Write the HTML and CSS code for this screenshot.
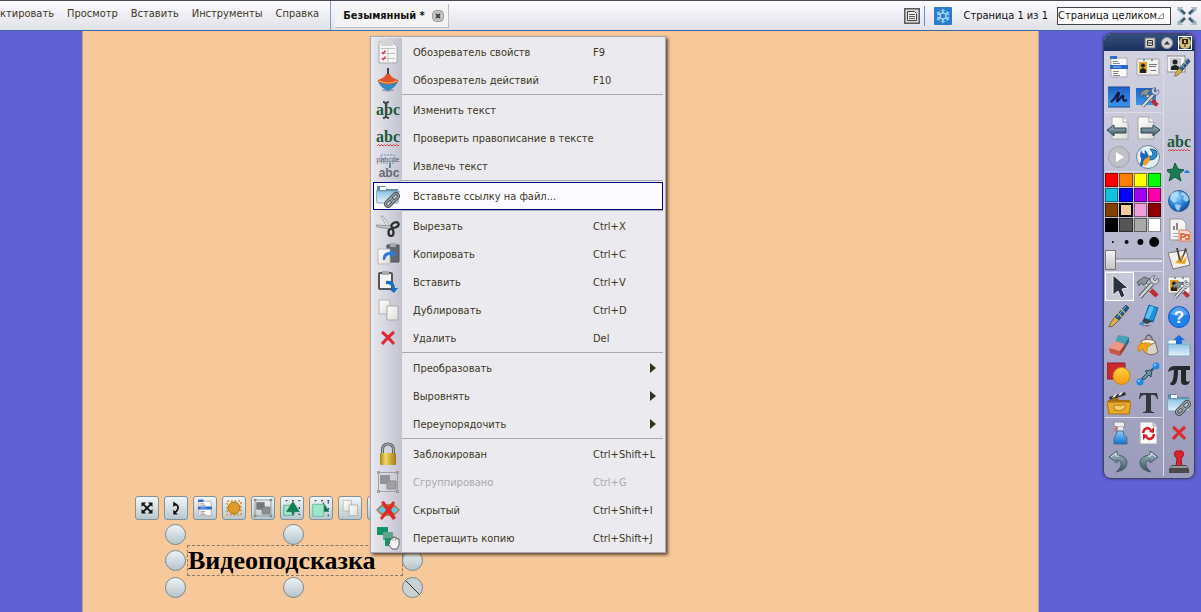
FILE: index.html
```html
<!DOCTYPE html>
<html lang="ru">
<head>
<meta charset="utf-8">
<title>Безымянный</title>
<link rel="stylesheet" href="styles.css">
</head>
<body>
<svg class="defs" aria-hidden="true">
  <defs>
    <linearGradient id="gBlue" x1="0" y1="0" x2="0" y2="1"><stop offset="0" stop-color="#8fd0f8"/><stop offset="1" stop-color="#0b6fd0"/></linearGradient>
    <linearGradient id="gDeep" x1="0" y1="0" x2="0" y2="1"><stop offset="0" stop-color="#1f62c4"/><stop offset="1" stop-color="#3b96ea"/></linearGradient>
    <linearGradient id="gFolder" x1="0" y1="0" x2="0" y2="1"><stop offset="0" stop-color="#8cc4e6"/><stop offset="1" stop-color="#e4f2fa"/></linearGradient>
    <linearGradient id="gGold" x1="0" y1="0" x2="1" y2="0"><stop offset="0" stop-color="#a8841c"/><stop offset=".35" stop-color="#f0d868"/><stop offset="1" stop-color="#a07c14"/></linearGradient>
    <linearGradient id="gPaper" x1="0" y1="0" x2="1" y2="1"><stop offset="0" stop-color="#fff"/><stop offset="1" stop-color="#dcdcd8"/></linearGradient>
    <linearGradient id="gOrange" x1="0" y1="0" x2="0" y2="1"><stop offset="0" stop-color="#ffd23c"/><stop offset="1" stop-color="#f59a10"/></linearGradient>
    <linearGradient id="gSteel" x1="0" y1="0" x2="0" y2="1"><stop offset="0" stop-color="#a4bcc4"/><stop offset="1" stop-color="#38525e"/></linearGradient>
    <radialGradient id="gGlobe" cx=".4" cy=".3" r=".8"><stop offset="0" stop-color="#9cdcff"/><stop offset=".5" stop-color="#2a86dc"/><stop offset="1" stop-color="#0b3c8c"/></radialGradient>
  </defs>
  <symbol id="i-folderlink" viewBox="0 0 24 24">
    <path d="M1 2h8l2 3h11v12H1z" fill="#5a8aa4"/><path d="M4 3h6v3H4z" fill="#fff"/>
    <path d="M0 7h23l-1 12H1z" fill="url(#gFolder)" stroke="#7ba6be"/>
    <g fill="none" stroke="#4c5458" stroke-width="3"><rect x="-4.500" y="-2.500" width="9" height="5" rx="2.500" transform="translate(18.500 13.500) rotate(-45)"/><rect x="-4.500" y="-2.500" width="9" height="5" rx="2.500" transform="translate(13.500 18.500) rotate(-45)"/></g>
    <g fill="none" stroke="#aab2b6" stroke-width="1"><rect x="-4.500" y="-2.500" width="9" height="5" rx="2.500" transform="translate(18.500 13.500) rotate(-45)"/><rect x="-4.500" y="-2.500" width="9" height="5" rx="2.500" transform="translate(13.500 18.500) rotate(-45)"/></g>
  </symbol>
  <symbol id="i-wave" viewBox="0 0 24 24">
    <path d="M1 20l1.500-1.500L4 20l1.500-1.500L7 20l1.500-1.500L10 20l1.500-1.500L13 20l1.500-1.500L16 20l1.500-1.500L19 20l1.500-1.500L22 20l1-1" fill="none" stroke="#e83a3a"/>
  </symbol>
  <symbol id="i-cross" viewBox="0 0 24 24"><path d="M6 6Q11 10 18 18M18 6Q12 11 6 18" fill="none" stroke="#dc2a34" stroke-width="3"/></symbol>
  <symbol id="i-list" viewBox="0 0 24 24">
    <path d="M4 3h16v19H4z" fill="#fafafa" stroke="#a8a8b0"/><path d="M3 1h7v3H3z" fill="#2c6ccc"/><path d="M3 10h18v4H3z" fill="#2a66c8"/>
    <path d="M6 6.500h5M6 8.500h7M6 16.500h6M6 18.500h5M6 20.500h7" stroke="#888"/><path d="M6 12h8" stroke="#9cc4ff"/>
  </symbol>
  <symbol id="i-copies" viewBox="0 0 24 24"><path d="M3 2h11v14H3z" fill="url(#gPaper)" stroke="#b4b4b0"/><path d="M11 8h11v14H11z" fill="url(#gPaper)" stroke="#a8a8a4"/></symbol>
  <symbol id="i-group" viewBox="0 0 24 24"><rect x="2.500" y="2.500" width="19" height="19" fill="none" stroke="#8a8a8a"/><path d="M4 5h10v9H4z" fill="#777"/><path d="M11 11h9v8h-9z" fill="#8e8e8e" stroke="#6e6e6e"/><path d="M1 1h3v3H1zM20 1h3v3h-3zM1 20h3v3H1zM20 20h3v3h-3z" fill="#8a8a8a"/></symbol>
  <symbol id="i-tools" viewBox="0 0 24 24">
    <path d="M7 7L19 20" stroke="#6c7478" stroke-width="4"/><path d="M7 7L19 20" stroke="#d8dee0" stroke-width="2.500"/><path d="M15 15l6 6" stroke="#c02a34" stroke-width="4.500"/>
    <path d="M1 7l7-5 6 2-3 2-1 3-3 1-2-2-2 3z" fill="#889498" stroke="#3c4448" stroke-width=".7"/>
    <path d="M4 22L16 9" stroke="#545c60" stroke-width="4.500"/><path d="M4 22L16 9" stroke="#d4dadc" stroke-width="2.500"/>
    <path d="M22 3l-3 3-2-2 2-3c-4-1-6 3-4 6l3 2c3 1 6-2 4-6z" fill="#ccd2d6" stroke="#596064" stroke-width=".8"/>
  </symbol>
  <symbol id="i-card" viewBox="0 0 24 24"><rect x="1" y="4" width="22" height="16" rx="1" fill="#f2f2f2" stroke="#a4a4a4"/><path d="M3 7h8v11H3z" fill="#e0a020"/><circle cx="7" cy="10.500" r="2" fill="#222"/><path d="M4 18v-3q3-4 6 0v3z" fill="#222"/><path d="M13 9.500h8M13 11.500h7M15 15.500h5" stroke="#777"/><path d="M7 5h2M15 5h2" stroke="#444"/></symbol>
  <symbol id="i-page" viewBox="0 0 24 24"><path d="M5 1h11l5 5v17H5z" fill="url(#gPaper)" stroke="#a8a8a8"/><path d="M16 1v5h5" fill="#fff" stroke="#a0a0a0"/></symbol>
  <symbol id="i-pen" viewBox="0 0 24 24"><path d="M20 1l3 3-10 12-4-3z" fill="#1e5888" stroke="#15304c" stroke-width=".7"/><path d="M15 5l4 4M12 9l4 4" stroke="#e4b848" stroke-width="1.200"/><path d="M9 13l4 3-6 6-4 1 2-5z" fill="#d8b048" stroke="#5a471c" stroke-width=".7"/><path d="M20 2l-9 11" stroke="#7cb8dc"/></symbol>
  <symbol id="i-note" viewBox="0 0 16 16"><rect x=".75" y=".75" width="14.500" height="14.500" fill="#d8d8d8" stroke="#5a5a5a" stroke-width="1.500"/><path d="M3.500 3.500h7l2 2v7h-9z" fill="#f4f4f4" stroke="#444"/><path d="M5 6.500h6M5 8.500h6M5 10.500h6" stroke="#555"/></symbol>
</svg>

<header class="topbar">
  <nav class="menubar">
    <button>ктировать</button>
    <button>Просмотр</button>
    <button>Вставить</button>
    <button>Инструменты</button>
    <button>Справка</button>
  </nav>
  <div class="tab">
    <span>Безымянный *</span>
    <button class="tab-close" aria-label="Закрыть"><svg viewBox="0 0 12 12"><rect x=".5" y=".5" width="11" height="11" rx="4" fill="#c4c4c4" stroke="#999"/><path d="M4 4l4 4M8 4l-4 4" stroke="#444" stroke-width="1.800"/></svg></button>
  </div>
  <div class="status">
    <button class="icon16" aria-label="Заметки"><svg viewBox="0 0 16 16"><use href="#i-note"/></svg></button>
    <span class="rule"></span>
    <button class="icon18" aria-label="Настройки"><svg viewBox="0 0 18 18"><rect width="18" height="18" rx="1" fill="#2c7ccc"/><g stroke="#9cd2f8" stroke-width="1.500" fill="none"><circle cx="9" cy="9" r="3"/><path d="M9 6V2M9 12v4M6.500 7.500L3 5.500M11.500 7.500L15 5.500M6.500 10.500L3 12.500M11.500 10.500L15 12.500"/><path d="M7 3l2 2 2-2M7 15l2-2 2 2M3 8l2-1V4M15 8l-2-1V4M3 10l2 1v3M15 10l-2 1v3" stroke-width="1"/></g></svg></button>
    <label for="zoom" class="pageno">Страница 1 из 1</label>
    <span class="zoom">
      <select id="zoom"><option>Страница целиком</option></select>
      <svg viewBox="0 0 8 8" aria-hidden="true"><path d="M1 6.500h5.500V1z" fill="#fff" stroke="#888"/></svg>
    </span>
    <button class="icon20" aria-label="Во весь экран"><svg viewBox="0 0 20 18"><path d="M1 1l7 6M19 1l-7 6M1 17l7-6M19 17l-7-6" stroke="#9ab4c4" stroke-width="4"/><path d="M4 3l4 4M16 3l-4 4M4 15l4-4M16 15l-4-4" stroke="#3c5668" stroke-width="2"/><path d="M0 .5h6M14 .5h6M0 17.500h6M14 17.500h6" stroke="#a8c0cc"/></svg></button>
  </div>
</header>

<main class="desk">
  <section class="sheet"></section>

  <div class="selection">
    <div class="handlebar">
      <button aria-label="Переместить"><svg viewBox="0 0 24 24"><path d="M8 8l8 8M16 8l-8 8" stroke="#111" stroke-width="2"/><path d="M6 6h5l-5 5zM18 6h-5l5 5zM6 18h5l-5-5zM18 18h-5l5-5z" fill="#111"/></svg></button>
      <button aria-label="Повернуть"><svg viewBox="0 0 24 24"><path d="M10 8q5 0 4 5-1 3-4 4" fill="none" stroke="#111" stroke-width="2"/><path d="M9 5v6l4-3zM9 14v5h5z" fill="#111"/></svg></button>
      <button aria-label="Меню"><svg viewBox="0 0 24 24"><use href="#i-list" x="2" y="2" width="20" height="20"/></svg></button>
      <button aria-label="Прозрачность"><svg viewBox="0 0 24 24"><rect x="4.500" y="4.500" width="15" height="15" fill="none" stroke="#d89a3c" stroke-width="2" stroke-dasharray="2 2"/><circle cx="12" cy="12" r="6.500" fill="#e09a28" stroke="#a86c10"/></svg></button>
      <button aria-label="Группировать"><svg viewBox="0 0 24 24"><use href="#i-group" x="1" y="1" width="22" height="22"/></svg></button>
      <button aria-label="На передний план"><svg viewBox="0 0 24 24"><path d="M3 9h11v11H3z" fill="#a4e4c8" stroke="#58ac88"/><path d="M13 5l7 11h-6v3h-2v-3H6z" fill="#128454" stroke="#086038" stroke-width=".5"/><path d="M5 4h16M19 19h2M20 11v2" stroke="#446" stroke-width="1.500" stroke-dasharray="2 5"/></svg></button>
      <button aria-label="Вперёд"><svg viewBox="0 0 24 24"><path d="M14 5l7 11h-7z" fill="#087050"/><path d="M3 8h12v13H3z" fill="#a0e4cc" stroke="#68bc9c"/><path d="M5 4h16M20 5v16" stroke="#446" stroke-width="1.500" stroke-dasharray="2 5"/></svg></button>
      <button aria-label="Дублировать"><svg viewBox="0 0 24 24"><use href="#i-copies" x="2" y="2" width="20" height="20"/></svg></button>
      <button aria-label="Перетащить копию"><svg viewBox="0 0 24 24"><path d="M3 8h8v8H3z" fill="#128454"/></svg></button>
    </div>
    <p class="object">Видеоподсказка</p>
    <i class="knob west north"></i><i class="knob mid north"></i>
    <i class="knob west center"></i><i class="knob east center"></i>
    <i class="knob west south"></i><i class="knob mid south"></i><i class="knob east south slash"></i>
  </div>

  <div class="context" role="menu">
    <button role="menuitem"><svg viewBox="0 0 24 24"><path d="M3 2h13l5 4v17H3z" fill="#f6f6f6" stroke="#aaa"/><path d="M5 1h12v5H5z" fill="#d4d4d0"/><path d="M5 8.500h14M5 13.500h14M5 18.500h14M12 8v14" stroke="#c0c0c0"/><path d="M6 12l1.500 1.500 2-3M6 18l1.500 1.500 2-3" stroke="#d84848" fill="none" stroke-width="1.500"/></svg><span>Обозреватель свойств</span><kbd>F9</kbd></button>
    <button role="menuitem"><svg viewBox="0 0 24 24"><path d="M12 0v7" stroke="#444" stroke-width="2"/><ellipse cx="12" cy="22" rx="6" ry="1.500" fill="#9a9aa8"/><path d="M2 13q10 6 20 0-2 6-7 8l-3 2-3-2q-5-2-7-8z" fill="#2c8cc8"/><path d="M10 6h4q0 3 8 6v2q-10 5-20 0v-2q8-3 8-6z" fill="#e05428"/><path d="M3 13q9 4 18 0" stroke="#f4c060" fill="none"/></svg><span>Обозреватель действий</span><kbd>F10</kbd></button>
    <hr>
    <button role="menuitem"><svg viewBox="0 0 24 24"><text x="12" y="17" text-anchor="middle" class="abc">abc</text><path d="M7 4q2 0 3 1.500Q11 4 13 4M10 5v14M7 20q2 0 3-1.500Q11 20 13 20" fill="none" stroke="#444" stroke-width="1.800"/></svg><span>Изменить текст</span></button>
    <button role="menuitem"><svg viewBox="0 0 24 24"><text x="12" y="16" text-anchor="middle" class="abc">abc</text><use href="#i-wave"/></svg><span>Проверить правописание в тексте</span></button>
    <button role="menuitem"><svg viewBox="0 0 24 24"><text x="12" y="8" text-anchor="middle" class="tiny">pabcde</text><path d="M5 1h13v8H5z" fill="none" stroke="#6a94b8" stroke-dasharray="2 1"/><path d="M14 9v5" stroke="#60889c" stroke-width="2"/><text x="13" y="23" text-anchor="middle" class="abc-sans">abc</text></svg><span>Извлечь текст</span></button>
    <hr>
    <button role="menuitem" class="current"><svg viewBox="0 0 24 24"><use href="#i-folderlink"/></svg><span>Вставьте ссылку на файл...</span></button>
    <hr>
    <button role="menuitem"><svg viewBox="0 0 24 24"><path d="M5 2l2 0 8 12-3 1z" fill="#e4e8ea" stroke="#8c9498" stroke-width=".7"/><path d="M0 11l1 2 13 2 2-3z" fill="#c0c6c8" stroke="#7c8488" stroke-width=".7"/><g fill="none" stroke="#2c2c2c" stroke-width="2.200"><ellipse cx="19" cy="11" rx="3.800" ry="2.500" transform="rotate(-25 19 11)"/><ellipse cx="15" cy="18.500" rx="2.500" ry="3.500"/></g></svg><span>Вырезать</span><kbd>Ctrl+X</kbd></button>
    <button role="menuitem"><svg viewBox="0 0 24 24"><path d="M11 3h12v17H11z" fill="#63676e" stroke="#4a4e54"/><path d="M14 1h6v4h-6z" fill="#a4a8ac"/><path d="M2 7h12v15H2z" fill="url(#gPaper)" stroke="#b8b8b8"/><path d="M7 18q-1-8 7-8V7l6 5-6 4v-3q-4 0-5 5z" fill="#2f7cd8"/></svg><span>Копировать</span><kbd>Ctrl+C</kbd></button>
    <button role="menuitem"><svg viewBox="0 0 24 24"><rect x="3" y="3" width="13" height="16" rx="1" fill="#f4f4f2" stroke="#555" stroke-width="2"/><path d="M6 1h7v4H6z" fill="#a8a8a8"/><path d="M10 11q8-2 9 7h3l-4 5-5-4h3q0-5-6-5z" fill="#1a6cc8"/></svg><span>Вставить</span><kbd>Ctrl+V</kbd></button>
    <button role="menuitem"><svg viewBox="0 0 24 24"><use href="#i-copies"/></svg><span>Дублировать</span><kbd>Ctrl+D</kbd></button>
    <button role="menuitem"><svg viewBox="0 0 24 24"><use href="#i-cross"/></svg><span>Удалить</span><kbd>Del</kbd></button>
    <hr>
    <button role="menuitem" class="more"><i></i><span>Преобразовать</span></button>
    <button role="menuitem" class="more"><i></i><span>Выровнять</span></button>
    <button role="menuitem" class="more"><i></i><span>Переупорядочить</span></button>
    <hr>
    <button role="menuitem"><svg viewBox="0 0 24 24"><path d="M6.500 12V8q0-6 5.500-6t5.500 6v4" fill="none" stroke="#5c6468" stroke-width="3"/><path d="M6.500 12V8q0-6 5.500-6t5.500 6v4" fill="none" stroke="#b4bcc0"/><rect x="4" y="11" width="16" height="12" rx="1" fill="url(#gGold)"/></svg><span>Заблокирован</span><kbd>Ctrl+Shift+L</kbd></button>
    <button role="menuitem" disabled><svg viewBox="0 0 24 24"><use href="#i-group"/></svg><span>Сгруппировано</span><kbd>Ctrl+G</kbd></button>
    <button role="menuitem"><svg viewBox="0 0 24 24"><path d="M0 12l6-6h12l6 6-6 6H6z" fill="#b47c48"/><path d="M2 12q5-6 8 0-3 6-8 0zM14 12q4-6 8 0-4 6-8 0z" fill="#60c8ec"/><path d="M5 4l3-1 4 6 5-6 2 2-4 7 5 8-3 2-5-7-6 7-2-2 6-8z" fill="#e02828"/></svg><span>Скрытый</span><kbd>Ctrl+Shift+I</kbd></button>
    <button role="menuitem"><svg viewBox="0 0 24 24"><path d="M1 1h11v8H1z" fill="#0e9468"/><path d="M7 6h10v8H7z" fill="#64a48c"/><path d="M9 12h11v8H9z" fill="#0e9468"/><path d="M14 17l-1-2 2-1v-2h2v-1h2v1h2v1h2v6l-2 4h-5l-4-5z" fill="#f4f4f4" stroke="#555" stroke-width=".9"/><path d="M17 12v3M19.500 12v3" stroke="#888" stroke-width=".7"/></svg><span>Перетащить копию</span><kbd>Ctrl+Shift+J</kbd></button>
  </div>

  <aside class="toolbox">
    <div class="toolbox-title">
      <button aria-label="Заметки"><svg viewBox="0 0 12 12"><rect x="1" y="1" width="10" height="10" fill="#d8d8d8" stroke="#777"/><path d="M3.500 3.500h5v5h-5zM4 6h4" fill="none" stroke="#333"/></svg></button>
      <button aria-label="Свернуть"><svg viewBox="0 0 12 12"><circle cx="6" cy="6" r="5.500" fill="#d4d4d8" stroke="#9a9a9a"/><path d="M3 7.500h6L6 4z" fill="#333"/></svg></button>
      <button class="pin" aria-label="Закрепить"><svg viewBox="0 0 12 12"><circle cx="6" cy="6" r="6" fill="#d4bc74"/><path d="M3 2h6v5H6.500v3h-1V7H3z" fill="#2c2818"/><path d="M5 3h2v3H5z" fill="#d4bc74"/></svg></button>
    </div>
    <div class="toolbox-body">
      <div class="tools-left">
        <div class="tiles tall">
          <button aria-label="Главное меню"><svg viewBox="0 0 24 24"><use href="#i-list"/></svg></button>
          <button aria-label="Профиль"><svg viewBox="0 0 24 24"><use href="#i-card"/></svg></button>
          <button aria-label="Аннотации"><svg viewBox="0 0 24 24"><path d="M1 2h22v20H1z" fill="url(#gDeep)"/><path d="M1 2h22M1 22h22" stroke="#184c94"/><path d="M4 17q4-3 7-9 2-1 0 4-2 5 0 4l4-5q2-1 1 2 0 4 4 2" fill="none" stroke="#0c1840" stroke-width="2"/></svg></button>
          <button aria-label="Инструменты рабочего стола"><svg viewBox="0 0 24 24"><path d="M0 3h20v17H0z" fill="url(#gDeep)"/><use href="#i-tools" x="3" y="2" width="21" height="21"/></svg></button>
        </div>
        <hr>
        <div class="tiles">
          <button aria-label="Предыдущая страница"><svg viewBox="0 0 24 24"><use href="#i-page"/><path d="M0 14l7-5v3h12v5H7v3z" fill="url(#gSteel)" stroke="#2c4450"/></svg></button>
          <button aria-label="Следующая страница"><svg viewBox="0 0 24 24"><use href="#i-page" x="-3"/><path d="M24 14l-7-5v3H5v5h12v3z" fill="url(#gSteel)" stroke="#2c4450"/></svg></button>
          <button aria-label="Воспроизвести"><svg viewBox="0 0 24 24"><circle cx="12" cy="12" r="10.500" fill="#c0c0c6" stroke="#a2a2ac"/><path d="M9 7l8 5-8 5z" fill="#fff"/></svg></button>
          <button aria-label="Запустить"><svg viewBox="0 0 24 24"><circle cx="12" cy="12" r="11.500" fill="#e2eef2" stroke="#6a8490"/><path d="M14 4q8 0 7 6-1 5-8 5 1-3-1-4 5 1 5-2 0-2-3-5z" fill="#2b8fd0" stroke="#105c9c"/><path d="M5 4q0 4 4 5-1-3 0-4 5 4 2 10-3 4-6 7-2-3 0-6 1-3-1-5z" fill="#1e66b0"/><path d="M7 19q0-5 4-6 2-1 2-3 2 5-1 8l-3 3z" fill="#f4a020"/></svg></button>
        </div>
        <hr>
        <div class="palette">
          <button class="c-red"></button><button class="c-orange"></button><button class="c-yellow"></button><button class="c-green"></button>
          <button class="c-cyan"></button><button class="c-blue"></button><button class="c-violet"></button><button class="c-magenta"></button>
          <button class="c-brown"></button><button class="c-peach"></button><button class="c-pink"></button><button class="c-maroon"></button>
          <button class="c-black"></button><button class="c-dark"></button><button class="c-gray"></button><button class="c-white"></button>
        </div>
        <svg class="dots" viewBox="0 0 58 16"><circle cx="8" cy="9" r="1" /><circle cx="22" cy="9" r="2"/><circle cx="36" cy="9" r="3"/><circle cx="50" cy="9" r="5"/></svg>
        <input class="width" type="range" min="0" max="100" value="0" aria-label="Толщина пера">
        <hr>
        <div class="tiles">
          <button class="active" aria-label="Выбрать"><svg viewBox="0 0 24 24"><path d="M6 0v20l5-4 3 7 4-2-3-7 6-1z" fill="#2c333c" stroke="#e6e6ee"/></svg></button>
          <button aria-label="Инструменты"><svg viewBox="0 0 24 24"><use href="#i-tools"/></svg></button>
          <button aria-label="Перо"><svg viewBox="0 0 24 24"><use href="#i-pen" x="-1"/></svg></button>
          <button aria-label="Маркер"><svg viewBox="0 0 24 24"><path d="M4 21h12l-5 2z" fill="#7c7c94"/><path d="M13 1l9 3-5 14-9-3z" fill="#1e90dc" stroke="#0a68b4"/><path d="M14 2l4 1-5 12-4-1z" fill="#60c0f4"/><path d="M8 14l9 3-6 3-5-2z" fill="#2c4858"/><path d="M5 18l4 2-6 1z" fill="#1c80cc"/></svg></button>
          <button aria-label="Ластик"><svg viewBox="0 0 24 24"><path d="M11 2l11 2-4 8-10-3z" fill="#4aa0b4"/><path d="M22 4v5l-5 8 1-6z" fill="#246c80"/><path d="M8 8l10 3-5 7-11-3z" fill="#f09484"/><path d="M2 15l11 3v5L3 20z" fill="#c4584c"/><path d="M13 18l5-7v5l-5 7z" fill="#a44038"/></svg></button>
          <button aria-label="Заливка"><svg viewBox="0 0 24 24"><path d="M9 8q1-6 4-6 3 1 4 7" fill="none" stroke="#686868" stroke-width="1.500"/><path d="M5 8l14 0 3 11q-6 5-12 1z" fill="#d8d4c4" stroke="#77705c"/><ellipse cx="12" cy="9" rx="7" ry="2.500" fill="#fcf4dc" stroke="#77705c"/><path d="M2 14q2-5 10-4 4 0 2 3-3-1-3 5-2 4-3 0-1-4-2-2-2 3-4 2z" fill="#f4a414" stroke="#b47410" stroke-width=".6"/></svg></button>
          <button aria-label="Фигура"><svg viewBox="0 0 24 24"><path d="M0 1h18v16H0z" fill="#cc2830" stroke="#941c20"/><circle cx="14.500" cy="14" r="8.500" fill="url(#gOrange)" stroke="#d08414"/></svg></button>
          <button aria-label="Соединитель"><svg viewBox="0 0 24 24"><path d="M3 20L20 4" stroke="#38586a" stroke-width="2"/><path d="M16 8l-1 7-2-2-5 5-2-2 5-5-2-2z" fill="#6890a0" stroke="#2c4858"/><circle cx="20" cy="4" r="3.500" fill="#1e8ce4"/><circle cx="4" cy="20" r="3.500" fill="#1e8ce4"/><circle cx="19" cy="3" r="1" fill="#b0e0ff"/><circle cx="3" cy="19" r="1" fill="#b0e0ff"/></svg></button>
          <button aria-label="Мультимедиа"><svg viewBox="0 0 24 24"><path d="M2 6L18 1l1 3L3 9z" fill="#333"/><path d="M5 7l2-3 3-1-2 3zM11 5l2-3 3-1-2 3z" fill="#eee"/><path d="M1 9h4l1-2h5l1 2h11v4H1z" fill="#a46c10"/><path d="M0 11h24l-2 12H2z" fill="#e8a82c" stroke="#a87014"/><path d="M8 19q-3-5 2-5 4 2 7-1 3 3 0 5-4 3-9 1z" fill="#f4cc68" stroke="#b07c18"/></svg></button>
          <button aria-label="Текст"><svg viewBox="0 0 24 24"><path d="M4 2h17l1 6h-1q-1-4-4-4h-2v15q0 2 3 2v1H7v-1q3 0 3-2V4H8Q5 4 4 8H3z" fill="#34373e"/></svg></button>
        </div>
        <hr>
        <div class="tiles">
          <button aria-label="Очистить"><svg viewBox="0 0 24 24"><path d="M7 1h10l1 5H10L7 5z" fill="#f0f0f4" stroke="#888"/><path d="M11 6h5v4h-5z" fill="#e8e8ec"/><path d="M10 6l-2 4" stroke="#d86c50" stroke-width="2"/><path d="M10 10h6q0 4 4 7v6H7v-6q3-3 3-7z" fill="url(#gBlue)" stroke="#446c90"/></svg></button>
          <button aria-label="Сброс страницы"><svg viewBox="0 0 24 24"><path d="M4 1h13l4 4v18H4z" fill="#fafafa" stroke="#a8a8a8"/><path d="M17 1v4h4" fill="#e0e0e0" stroke="#a0a0a0"/><g fill="none" stroke="#d41c24" stroke-width="2.500"><path d="M7 12q1-5 5-5l3 2M18 13q-1 5-5 5l-3-2"/></g><path d="M18 6v6l-5-1zM7 19v-6l5 1z" fill="#d41c24"/></svg></button>
          <button aria-label="Отменить"><svg viewBox="0 0 24 24"><path d="M2 7l8-6v4q10 1 10 8 0 7-11 9 6-5 5-9-1-3-4-3v3z" fill="url(#gSteel)" stroke="#455e6a"/><path d="M4 7l5-4v3h3" fill="none" stroke="#e0ecf0"/></svg></button>
          <button aria-label="Повторить"><svg viewBox="0 0 24 24"><path d="M22 7l-8-6v4Q4 6 4 13q0 7 11 9-6-5-5-9 1-3 4-3v3z" fill="url(#gSteel)" stroke="#455e6a"/><path d="M20 7l-5-4v3h-3" fill="none" stroke="#e0ecf0"/></svg></button>
        </div>
      </div>
      <div class="tools-right">
        <button class="first" aria-label="Редактировать профиль"><svg viewBox="0 0 24 24"><rect x="0" y="1" width="18" height="16" fill="#f0f0f0" stroke="#888"/><path d="M3 3h11v12H3z" fill="#c8ccd0"/><circle cx="8" cy="7" r="2.500" fill="#222"/><path d="M4 15v-3q4-4 8 0v3z" fill="#222"/><use href="#i-pen" x="5" y="2" width="19" height="21"/></svg></button>
        <button aria-label="Правописание"><svg viewBox="0 0 24 24"><text x="12" y="16" text-anchor="middle" class="abc">abc</text><use href="#i-wave"/></svg></button>
        <button aria-label="Избранное"><svg viewBox="0 0 24 24"><path d="M8 3l3 6 6 1-5 4 2 7-6-4-6 4 2-7-5-4 7-1z" fill="#1c7c58" stroke="#0e5c3c"/><path d="M17 13q3-6 6 0z" fill="#1c80dc"/></svg></button>
        <button aria-label="Интернет"><svg viewBox="0 0 24 24"><circle cx="12" cy="12" r="10.500" fill="url(#gGlobe)" stroke="#3c5c88"/><path d="M4 5q5-4 8-2l-1 4-3 2 2 3-3 2-4-4zM15 3q6 2 7 8l-3 2-3-3 1-3-3-1zM8 15l6 1-2 6q-4-1-4-7z" fill="#b8e4fc" opacity=".8"/></svg></button>
        <button aria-label="Экспорт"><svg viewBox="0 0 24 24"><path d="M3 1h12l4 4v17H3z" fill="#f4f4f4" stroke="#999"/><path d="M6 12V8h2v4zM9 12V5h2v7z" fill="#888"/><path d="M6 15.500h8M6 18.500h5" stroke="#aaa"/><path d="M12 12h8l4 3v8H12z" fill="#f8dcd0" stroke="#e07a50"/><path d="M14 22v-6h3q3 2 0 3h-2M18 17h4v4h-4" fill="none" stroke="#e0562c" stroke-width="1.500"/></svg></button>
        <button aria-label="Эскиз"><svg viewBox="0 0 24 24"><path d="M1 6l18-3 4 15-17 4z" fill="#f2f0e8" stroke="#777"/><path d="M8 16l9-10-2 9 5-6-2 8z" fill="#f4a020"/><path d="M9 1h2l3 14-2-2zM18 1l2 1-6 13z" fill="#444"/></svg></button>
        <button aria-label="Настройка профиля"><svg viewBox="0 0 24 24"><use href="#i-card" y="-3"/><use href="#i-tools" x="5" y="4" width="19" height="19"/></svg></button>
        <button aria-label="Справка"><svg viewBox="0 0 24 24"><circle cx="12" cy="12" r="10.500" fill="#2080ec" stroke="#155cb4"/><path d="M3 9q9-14 18 0-9 4-18 0z" fill="#7cbcfc" opacity=".6"/><text x="12" y="18" text-anchor="middle" class="help">?</text></svg></button>
        <button aria-label="Загрузить"><svg viewBox="0 0 24 24"><path d="M1 6h9l2 3h11v10H1z" fill="#f8fafc" stroke="#8cacbc"/><path d="M1 10h22v12H1z" fill="url(#gFolder)" stroke="#7ca4b8"/><path d="M12 1l6 5h-3v4H9V6H6z" fill="#1c70dc"/></svg></button>
        <button aria-label="Формула"><svg viewBox="0 0 24 24"><path d="M1 9q1-6 6-6h16v4h-4v10q0 3 4 1-1 4-5 4-4 0-4-4V7h-3q0 9-2 13-2 3-5 2-2-2 1-3 2-5 2-12Q3 7 1 9z" fill="#25272c"/></svg></button>
        <button aria-label="Ссылка на файл"><svg viewBox="0 0 24 24"><use href="#i-folderlink"/></svg></button>
        <button aria-label="Удалить"><svg viewBox="0 0 24 24"><use href="#i-cross"/></svg></button>
        <button aria-label="Штамп"><svg viewBox="0 0 24 24"><path d="M9 1h6q3 2 1 5l-2 3 1 7H9l1-7-2-3Q6 3 9 1z" fill="#dc2430" stroke="#a0141c"/><path d="M5 15h14l3 4v4H2v-4z" fill="#4a4a4e"/><path d="M5 16h14l2 2H3z" fill="#989898"/></svg></button>
      </div>
    </div>
  </aside>
</main>
</body>
</html>
```

FILE: styles.css
```css
* { box-sizing: border-box; }

body {
  margin: 0;
  min-height: 100vh;
  display: flex;
  flex-direction: column;
  overflow: hidden;
  font-family: "DejaVu Sans Condensed", "Noto Sans", sans-serif;
  font-size: 11px;
  line-height: 14px;
  color: #3c3824;
}

button {
  margin: 0;
  padding: 0;
  border: 0;
  background: none;
  font: inherit;
  color: inherit;
  text-align: left;
}

svg { display: block; }
.defs { position: absolute; width: 0; height: 0; }

.abc { font: bold 16px "Liberation Serif", serif; fill: #1c5a3c; }
.abc-sans { font: bold 12px "Liberation Sans", sans-serif; fill: #666a72; }
.tiny { font: 7px "Liberation Sans", sans-serif; fill: #555a66; }
.help { font: bold 17px "Liberation Sans", sans-serif; fill: #fff; }

/* Top bar */
.topbar {
  display: flex;
  height: 31px;
  border-top: 1px solid #4a4a50;
  border-bottom: 1px solid #3f67a4;
  background: linear-gradient(#fbfbff, #e0e0e8);
}
.menubar {
  display: flex;
  gap: 13px;
  align-items: flex-start;
  padding: 6px 11px 0 0;
  border-right: 1px solid #7f9cce;
}
.tab {
  display: flex;
  align-items: center;
  gap: 7px;
  margin: 3px 0 2px 4px;
  padding: 0 4px 0 8px;
  border-right: 1px solid #bdbdc2;
  border-bottom: 1px solid #bdbdc2;
  background: #f4f4f4;
  font-weight: bold;
  color: #111;
}
.tab-close svg { width: 12px; height: 12px; }
.status {
  display: flex;
  align-items: center;
  margin-left: auto;
  padding-right: 4px;
  color: #111;
}
.icon16 svg { width: 16px; height: 16px; }
.icon18 svg { width: 18px; height: 18px; }
.icon20 svg { width: 20px; height: 18px; }
.rule { width: 1px; height: 20px; margin: 0 9px 0 4px; background: #6f8fc4; }
.pageno { margin: 0 9px 0 12px; }
.zoom {
  display: flex;
  align-items: center;
  width: 114px;
  height: 18px;
  margin-right: 6px;
  padding-right: 5px;
  border: 1px solid #444;
  background: #fff;
}
.zoom select {
  appearance: none;
  flex: 1;
  min-width: 0;
  padding: 0;
  border: 0;
  background: none;
  font: inherit;
  color: #111;
}
.zoom svg { width: 8px; height: 8px; }

/* Work area */
.desk {
  position: relative;
  flex: 1;
  display: flex;
  min-height: 581px;
  padding: 0 162px 0 82px;
  background: #6161d6;
  overflow: hidden;
}
.sheet {
  flex: 1;
  border: solid #b9a0a8;
  border-width: 0 1px;
  background: #f7c899;
}

/* Selected object with its handles, placed freely on the canvas */
.selection {
  position: absolute;
  left: 135px;
  top: 465px;
  width: 290px;
  height: 103px;
}
.handlebar { display: flex; gap: 5px; }
.handlebar button {
  width: 24px;
  height: 24px;
  border: 1px solid #7f9298;
  border-radius: 3px;
  background: linear-gradient(#f2f6f8, #b9c8ce);
}
.handlebar svg { width: 22px; height: 22px; }
.object {
  position: absolute;
  left: 52px;
  top: 49px;
  width: 216px;
  margin: 0;
  border: 1px dashed #8a7a66;
  font: bold 26px/29px "Liberation Serif", serif;
  color: #000;
}
.knob {
  position: absolute;
  width: 21px;
  height: 21px;
  border: 1px solid #78888f;
  border-radius: 50%;
  background: linear-gradient(#eef3f5, #b4c4ca);
}
.west { left: 30px; }
.mid { left: 148px; }
.east { left: 267px; }
.north { top: 28px; }
.center { top: 54px; }
.south { top: 81px; }
.slash { background: linear-gradient(45deg, #c8d2d4 48%, #333 48% 52%, #c8d2d4 52%); }

/* Context menu */
.context {
  position: absolute;
  left: 370px;
  top: 5px;
  width: 296px;
  padding: 1px 2px 0;
  border: 1px solid #a6a6b4;
  background: linear-gradient(90deg, #e6e6f0, #c3c3cf) 2px 1px / 29px 100% no-repeat, #ebeaef;
  box-shadow: 2px 2px 3px rgba(60, 40, 20, .8);
}
.context button {
  display: grid;
  grid-template-columns: 40px 180px 1fr;
  align-items: center;
  width: 100%;
  height: 28px;
}
.context svg { width: 24px; height: 24px; margin-left: 3px; }
.context span, .context kbd {
  padding-top: 2px;
  font: inherit;
  white-space: nowrap;
}
.context hr {
  height: 2px;
  margin: 0 0 0 29px;
  border: 0;
  border-top: 1px solid #a9a9b6;
}
.context .current {
  border: 1px solid #000080;
  background: #fbfbff;
  grid-template-columns: 39px 180px 1fr;
}
.context .current svg { margin-left: 2px; }
.context :disabled { color: #aaa; }
.context :disabled svg { opacity: .7; }
.more::after {
  content: "";
  justify-self: end;
  margin-right: 7px;
  border: solid transparent;
  border-width: 5px 0 5px 6px;
  border-left-color: #333020;
}

/* Floating toolbox */
.toolbox {
  position: absolute;
  right: 6px;
  top: 2px;
  width: 92px;
  border: 1px solid #42426c;
  border-radius: 8px;
  background: linear-gradient(#d4d4e2, #9a9abb);
  box-shadow: 0 0 3px #333380;
  overflow: hidden;
}
.toolbox-title {
  display: flex;
  justify-content: flex-end;
  align-items: center;
  gap: 5px;
  height: 17px;
  padding-right: 2px;
  background: linear-gradient(#35507e, #1c305c);
}
.toolbox-title svg { width: 12px; height: 12px; }
.toolbox-title .pin { border: 1px solid #fff; }
.toolbox-body { display: flex; padding: 1px 1px 2px; }
.tools-left { width: 59px; border-right: 1px solid #dcdce6; padding-right: 1px; }
.tiles { display: grid; grid-template-columns: 1fr 1fr; grid-auto-rows: 29px; }
.tall { grid-auto-rows: 30px; }
.tiles button, .tools-right button { display: grid; place-items: center; }
.tiles svg, .tools-right svg { width: 24px; height: 24px; }
.tiles .active { border: 1px solid #fff; background: #c8c8d8; }
.tools-left hr { height: 1px; margin: 0; border: 0; background: #dcdce6; }
.palette { display: grid; grid-template-columns: repeat(4, 1fr); grid-auto-rows: 15px; margin-top: 1px; }
.palette button { margin: 0 1px 1px 0; border: 1px solid rgba(0, 0, 0, .45); }
.c-red { background: #f00; }
.c-orange { background: #ff8000; }
.c-yellow { background: #ff0; }
.c-green { background: #0f0; }
.c-cyan { background: #10c4e0; }
.c-blue { background: #00f; }
.c-violet { background: #a000f4; }
.c-magenta { background: #ff00a8; }
.c-brown { background: #804000; }
.c-pink { background: #f0a0d8; }
.c-maroon { background: #900000; }
.c-black { background: #000; }
.c-dark { background: #555; }
.c-gray { background: #aaa; }
.c-white { background: #fff; }
.palette .c-peach { border: 2px solid #000; background: #f7c899; }
.dots { width: 100%; height: 16px; }
.width {
  appearance: none;
  display: block;
  width: 100%;
  height: 21px;
  margin: 0 0 1px;
  background: linear-gradient(#8c8ca4, #fff) 0 9px / 100% 4px no-repeat;
}
.width::-webkit-slider-thumb {
  appearance: none;
  width: 11px;
  height: 20px;
  border: 1px solid #777;
  background: linear-gradient(#f4f4f4, #c4c4c4);
}
.tools-right { flex: 1; display: flex; flex-direction: column; justify-content: flex-end; }
.tools-right button { height: 29px; }
.tools-right .first { margin-bottom: auto; }
```
